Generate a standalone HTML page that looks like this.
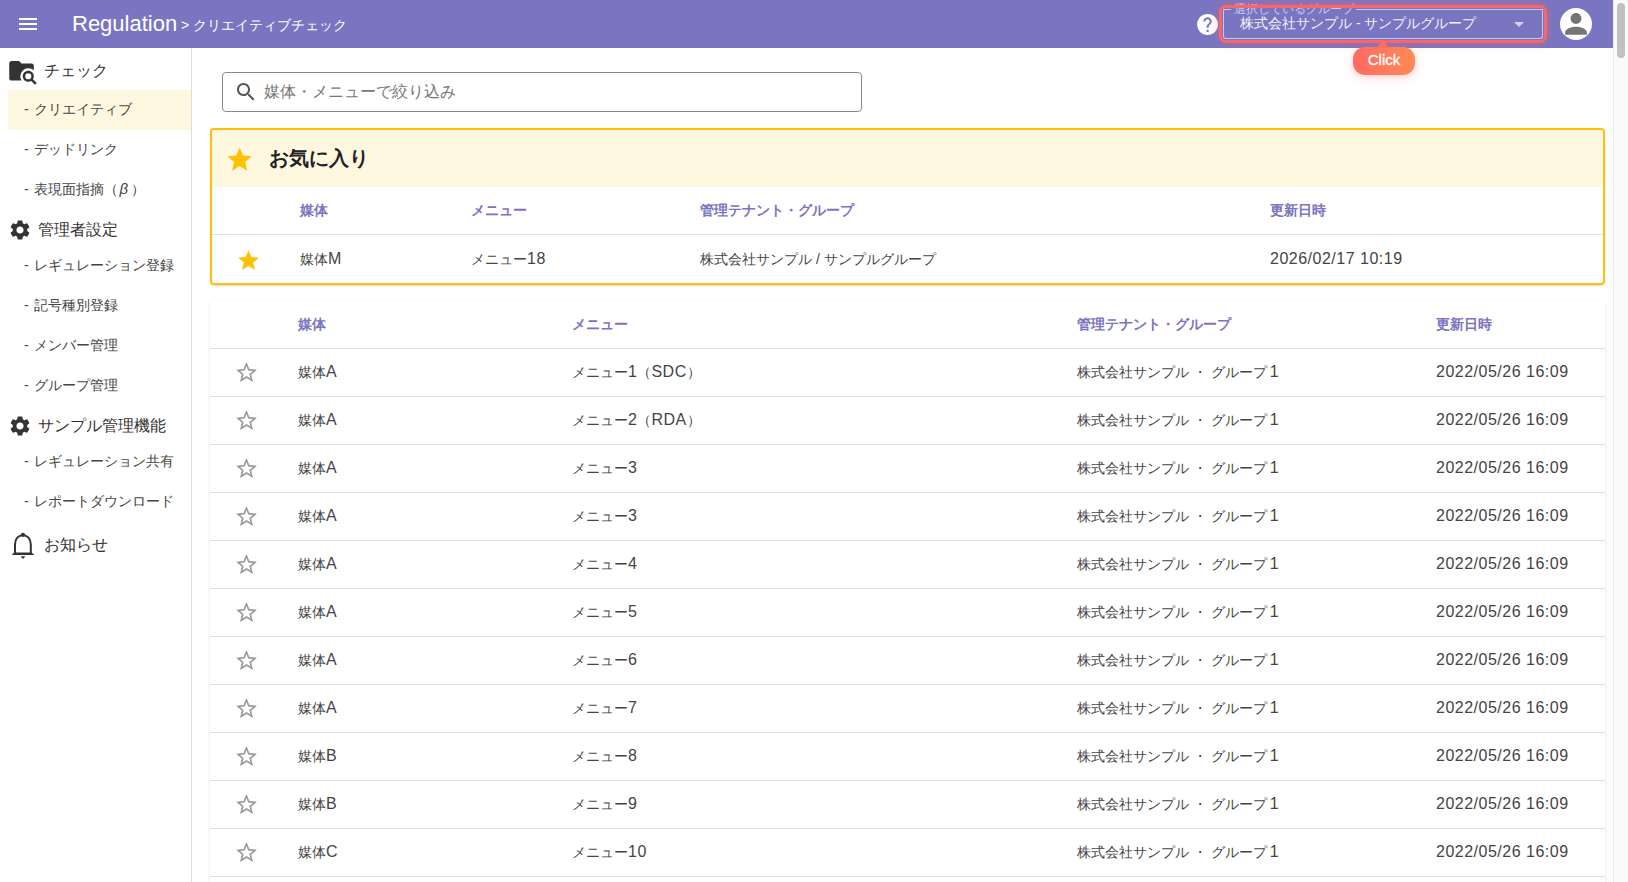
<!DOCTYPE html>
<html><head><meta charset="utf-8"><title>Regulation</title>
<style>
*{box-sizing:border-box;margin:0;padding:0}
html,body{width:1628px;height:882px;overflow:hidden;background:#fff;font-family:"Liberation Sans",sans-serif;color:#444}
i{font-style:normal;display:inline-block;width:1em;text-align:center}
.abs{position:absolute}
#hdr{position:absolute;left:0;top:0;width:1613px;height:48px;background:#7a75c1}
#sb{position:absolute;left:1613px;top:0;width:15px;height:882px;background:#fafafa;border-left:1px solid #ebebeb}
#thumb{position:absolute;left:1617px;top:3px;width:8px;height:55px;border-radius:4px;background:#c1c1c1}
#side{position:absolute;left:0;top:48px;width:192px;height:834px;border-right:1px solid #ddd;background:#fff}
.si{position:absolute;left:24px;font-size:14px;color:#444;white-space:nowrap;line-height:20px;word-spacing:1px}
.sh{position:absolute;font-size:16px;color:#333;white-space:nowrap;line-height:22px}
.t{position:absolute;white-space:nowrap;font-size:14px;line-height:20px;color:#444}
.l{font-size:16px;letter-spacing:.5px}
.th{position:absolute;white-space:nowrap;font-size:14px;line-height:20px;color:#7a75c1;font-weight:bold}
.line{position:absolute;height:1px;background:#e0e0e0}
</style></head><body>
<div id="hdr">
<svg class="abs" style="left:16px;top:12px" width="24" height="24" viewBox="0 0 24 24"><path fill="#fff" d="M3 18h18v-2H3v2zm0-5h18v-2H3v2zm0-7v2h18V6H3z"/></svg>
<div class="abs" style="left:72px;top:10px;font-size:22px;line-height:28px;color:#fff;white-space:nowrap">Regulation</div>
<div class="abs" style="left:181px;top:15px;font-size:14px;line-height:20px;color:#fff;white-space:nowrap">&gt; <i>ク</i><i>リ</i><i>エ</i><i>イ</i><i>テ</i><i>ィ</i><i>ブ</i><i>チ</i><i>ェ</i><i>ッ</i><i>ク</i></div>
<svg class="abs" style="left:1194.9px;top:11.9px" width="25.2" height="25.2" viewBox="0 0 24 24"><path fill="#fff" d="M12 2C6.48 2 2 6.48 2 12s4.48 10 10 10 10-4.48 10-10S17.52 2 12 2zm1 17h-2v-2h2v2zm2.07-7.75l-.9.92C13.45 12.9 13 13.5 13 15h-2v-.5c0-1.1.45-2.1 1.17-2.83l1.24-1.26c.37-.36.59-.86.59-1.41 0-1.1-.9-2-2-2s-2 .9-2 2H8c0-2.21 1.79-4 4-4s4 1.79 4 4c0 .88-.36 1.68-.93 2.25z"/></svg>
<div class="abs" style="left:1223px;top:9px;width:320px;height:30px;border:1px solid #c8c6f0;border-top:none;border-radius:3px"></div>
<div class="abs" style="left:1223px;top:9px;width:8px;height:1px;background:#c8c6f0"></div>
<div class="abs" style="left:1356px;top:9px;width:187px;height:1px;background:#c8c6f0"></div>
<div class="abs" style="left:1234px;top:2px;font-size:12px;line-height:14px;color:#cdcaf0;white-space:nowrap"><i>選</i><i>択</i><i>し</i><i>て</i><i>い</i><i>る</i><i>グ</i><i>ル</i><i>ー</i><i>プ</i></div>
<div class="abs" style="left:1240px;top:14px;font-size:14px;line-height:18px;color:#f4f4fc;white-space:nowrap"><i>株</i><i>式</i><i>会</i><i>社</i><i>サ</i><i>ン</i><i>プ</i><i>ル</i> - <i>サ</i><i>ン</i><i>プ</i><i>ル</i><i>グ</i><i>ル</i><i>ー</i><i>プ</i></div>
<div class="abs" style="left:1219px;top:5px;width:328px;height:38px;border:3.5px solid #ff6464;border-radius:7px;box-shadow:0 0 8px rgba(255,100,100,.45)"></div>
<svg class="abs" style="left:1514px;top:22px" width="10" height="5" viewBox="0 0 10 5"><path d="M0 0h10L5 5z" fill="#d6d0f2"/></svg>
<svg class="abs" style="left:1560px;top:8px" width="32" height="32" viewBox="0 0 32 32"><circle cx="16" cy="16" r="16" fill="#fff"/><g transform="translate(-0.3,-0.4) scale(1.36)"><path fill="#757575" d="M12 12c2.21 0 4-1.79 4-4s-1.79-4-4-4-4 1.79-4 4 1.79 4 4 4zm0 2c-2.67 0-8 1.34-8 4v2h16v-2c0-2.66-5.33-4-8-4z"/></g></svg>
</div>
<div class="abs" style="left:1353px;top:47px;width:62px;height:28px;border-radius:12px;background:linear-gradient(90deg,#ff6a64,#ff8a55);box-shadow:0 2px 10px rgba(255,110,110,.35)"></div>
<svg class="abs" style="left:1377px;top:39px" width="12" height="9" viewBox="0 0 12 9"><path d="M6 0L12 9H0z" fill="#ff6c62"/></svg>
<div class="abs" style="left:1353px;top:50px;width:62px;text-align:center;font-size:15px;line-height:20px;color:#fff;-webkit-text-stroke:.3px #fff">Click</div>
<div id="sb"></div><div id="thumb"></div>
<div id="side"><div class="abs" style="left:8px;top:42px;width:183px;height:40px;background:#fff8e1"></div></div>
<div class="sh" style="left:44px;top:60px"><i>チ</i><i>ェ</i><i>ッ</i><i>ク</i></div>
<div class="si" style="top:99px">- <i>ク</i><i>リ</i><i>エ</i><i>イ</i><i>テ</i><i>ィ</i><i>ブ</i></div>
<div class="si" style="top:139px">- <i>デ</i><i>ッ</i><i>ド</i><i>リ</i><i>ン</i><i>ク</i></div>
<div class="si" style="top:179px">- <i>表</i><i>現</i><i>面</i><i>指</i><i>摘</i><i>（</i><span style="font-style:italic;font-size:15px;margin:0 3px 0 2px">β</span><i>）</i></div>
<div class="sh" style="left:38px;top:219px"><i>管</i><i>理</i><i>者</i><i>設</i><i>定</i></div>
<div class="si" style="top:255px">- <i>レ</i><i>ギ</i><i>ュ</i><i>レ</i><i>ー</i><i>シ</i><i>ョ</i><i>ン</i><i>登</i><i>録</i></div>
<div class="si" style="top:295px">- <i>記</i><i>号</i><i>種</i><i>別</i><i>登</i><i>録</i></div>
<div class="si" style="top:335px">- <i>メ</i><i>ン</i><i>バ</i><i>ー</i><i>管</i><i>理</i></div>
<div class="si" style="top:375px">- <i>グ</i><i>ル</i><i>ー</i><i>プ</i><i>管</i><i>理</i></div>
<div class="sh" style="left:38px;top:415px"><i>サ</i><i>ン</i><i>プ</i><i>ル</i><i>管</i><i>理</i><i>機</i><i>能</i></div>
<div class="si" style="top:451px">- <i>レ</i><i>ギ</i><i>ュ</i><i>レ</i><i>ー</i><i>シ</i><i>ョ</i><i>ン</i><i>共</i><i>有</i></div>
<div class="si" style="top:491px">- <i>レ</i><i>ポ</i><i>ー</i><i>ト</i><i>ダ</i><i>ウ</i><i>ン</i><i>ロ</i><i>ー</i><i>ド</i></div>
<div class="sh" style="left:44px;top:534px"><i>お</i><i>知</i><i>ら</i><i>せ</i></div>
<div class="abs" style="left:222px;top:72px;width:640px;height:40px;border:1px solid #888;border-radius:4px"></div>
<div class="t" style="left:264px;top:82px;font-size:16px;color:#777"><i>媒</i><i>体</i><i>・</i><i>メ</i><i>ニ</i><i>ュ</i><i>ー</i><i>で</i><i>絞</i><i>り</i><i>込</i><i>み</i></div>
<div class="abs" style="left:210px;top:128px;width:1395px;height:157px;border:2px solid #ffc107;border-radius:4px;overflow:hidden;box-shadow:0 1px 2px rgba(0,0,0,.15)"><div class="abs" style="left:0;top:0;width:100%;height:57px;background:#fff8e1"></div><div class="line" style="left:0;top:104px;width:100%"></div></div>
<div class="t" style="left:269px;top:146px;font-size:20px;line-height:24px;color:#222;font-weight:bold"><i>お</i><i>気</i><i>に</i><i>入</i><i>り</i></div>
<div class="th" style="left:300px;top:200px"><i>媒</i><i>体</i></div>
<div class="th" style="left:471px;top:200px"><i>メ</i><i>ニ</i><i>ュ</i><i>ー</i></div>
<div class="th" style="left:700px;top:200px"><i>管</i><i>理</i><i>テ</i><i>ナ</i><i>ン</i><i>ト</i><i>・</i><i>グ</i><i>ル</i><i>ー</i><i>プ</i></div>
<div class="th" style="left:1270px;top:200px"><i>更</i><i>新</i><i>日</i><i>時</i></div>
<div class="t" style="left:300px;top:249px"><i>媒</i><i>体</i><span class="l">M</span></div>
<div class="t" style="left:471px;top:249px"><i>メ</i><i>ニ</i><i>ュ</i><i>ー</i><span class="l">18</span></div>
<div class="t" style="left:700px;top:249px"><i>株</i><i>式</i><i>会</i><i>社</i><i>サ</i><i>ン</i><i>プ</i><i>ル</i> / <i>サ</i><i>ン</i><i>プ</i><i>ル</i><i>グ</i><i>ル</i><i>ー</i><i>プ</i></div>
<div class="t" style="left:1270px;top:249px"><span class="l">2026/02/17 10:19</span></div>
<div class="abs" style="left:210px;top:300px;width:1395px;height:600px;box-shadow:0 1px 3px rgba(0,0,0,.12);border-radius:4px;background:#fff"></div>
<div class="th" style="left:298px;top:314px"><i>媒</i><i>体</i></div>
<div class="th" style="left:572px;top:314px"><i>メ</i><i>ニ</i><i>ュ</i><i>ー</i></div>
<div class="th" style="left:1077px;top:314px"><i>管</i><i>理</i><i>テ</i><i>ナ</i><i>ン</i><i>ト</i><i>・</i><i>グ</i><i>ル</i><i>ー</i><i>プ</i></div>
<div class="th" style="left:1436px;top:314px"><i>更</i><i>新</i><i>日</i><i>時</i></div>
<div class="line" style="left:210px;top:348px;width:1395px"></div>
<svg class="abs" style="left:233.9px;top:360px" width="25" height="25" viewBox="0 0 24 24"><path fill="#999" d="M22 9.24l-7.19-.62L12 2 9.19 8.63 2 9.24l5.46 4.73L5.82 21 12 17.27 18.18 21l-1.63-7.03L22 9.24zM12 15.4l-3.76 2.27 1-4.28-3.32-2.88 4.38-.38L12 6.1l1.71 4.04 4.38.38-3.32 2.88 1 4.28L12 15.4z"/></svg>
<div class="t" style="left:298px;top:362px"><i>媒</i><i>体</i><span class="l">A</span></div>
<div class="t" style="left:572px;top:362px"><i>メ</i><i>ニ</i><i>ュ</i><i>ー</i><span class="l">1</span><i>（</i><span class="l">SDC</span><i>）</i></div>
<div class="t" style="left:1077px;top:362px"><i>株</i><i>式</i><i>会</i><i>社</i><i>サ</i><i>ン</i><i>プ</i><i>ル</i> <i>・</i> <i>グ</i><i>ル</i><i>ー</i><i>プ</i><span class="l" style="margin-left:3px">1</span></div>
<div class="t" style="left:1436px;top:362px"><span class="l">2022/05/26 16:09</span></div>
<div class="line" style="left:210px;top:396px;width:1395px"></div>
<svg class="abs" style="left:233.9px;top:408px" width="25" height="25" viewBox="0 0 24 24"><path fill="#999" d="M22 9.24l-7.19-.62L12 2 9.19 8.63 2 9.24l5.46 4.73L5.82 21 12 17.27 18.18 21l-1.63-7.03L22 9.24zM12 15.4l-3.76 2.27 1-4.28-3.32-2.88 4.38-.38L12 6.1l1.71 4.04 4.38.38-3.32 2.88 1 4.28L12 15.4z"/></svg>
<div class="t" style="left:298px;top:410px"><i>媒</i><i>体</i><span class="l">A</span></div>
<div class="t" style="left:572px;top:410px"><i>メ</i><i>ニ</i><i>ュ</i><i>ー</i><span class="l">2</span><i>（</i><span class="l">RDA</span><i>）</i></div>
<div class="t" style="left:1077px;top:410px"><i>株</i><i>式</i><i>会</i><i>社</i><i>サ</i><i>ン</i><i>プ</i><i>ル</i> <i>・</i> <i>グ</i><i>ル</i><i>ー</i><i>プ</i><span class="l" style="margin-left:3px">1</span></div>
<div class="t" style="left:1436px;top:410px"><span class="l">2022/05/26 16:09</span></div>
<div class="line" style="left:210px;top:444px;width:1395px"></div>
<svg class="abs" style="left:233.9px;top:456px" width="25" height="25" viewBox="0 0 24 24"><path fill="#999" d="M22 9.24l-7.19-.62L12 2 9.19 8.63 2 9.24l5.46 4.73L5.82 21 12 17.27 18.18 21l-1.63-7.03L22 9.24zM12 15.4l-3.76 2.27 1-4.28-3.32-2.88 4.38-.38L12 6.1l1.71 4.04 4.38.38-3.32 2.88 1 4.28L12 15.4z"/></svg>
<div class="t" style="left:298px;top:458px"><i>媒</i><i>体</i><span class="l">A</span></div>
<div class="t" style="left:572px;top:458px"><i>メ</i><i>ニ</i><i>ュ</i><i>ー</i><span class="l">3</span></div>
<div class="t" style="left:1077px;top:458px"><i>株</i><i>式</i><i>会</i><i>社</i><i>サ</i><i>ン</i><i>プ</i><i>ル</i> <i>・</i> <i>グ</i><i>ル</i><i>ー</i><i>プ</i><span class="l" style="margin-left:3px">1</span></div>
<div class="t" style="left:1436px;top:458px"><span class="l">2022/05/26 16:09</span></div>
<div class="line" style="left:210px;top:492px;width:1395px"></div>
<svg class="abs" style="left:233.9px;top:504px" width="25" height="25" viewBox="0 0 24 24"><path fill="#999" d="M22 9.24l-7.19-.62L12 2 9.19 8.63 2 9.24l5.46 4.73L5.82 21 12 17.27 18.18 21l-1.63-7.03L22 9.24zM12 15.4l-3.76 2.27 1-4.28-3.32-2.88 4.38-.38L12 6.1l1.71 4.04 4.38.38-3.32 2.88 1 4.28L12 15.4z"/></svg>
<div class="t" style="left:298px;top:506px"><i>媒</i><i>体</i><span class="l">A</span></div>
<div class="t" style="left:572px;top:506px"><i>メ</i><i>ニ</i><i>ュ</i><i>ー</i><span class="l">3</span></div>
<div class="t" style="left:1077px;top:506px"><i>株</i><i>式</i><i>会</i><i>社</i><i>サ</i><i>ン</i><i>プ</i><i>ル</i> <i>・</i> <i>グ</i><i>ル</i><i>ー</i><i>プ</i><span class="l" style="margin-left:3px">1</span></div>
<div class="t" style="left:1436px;top:506px"><span class="l">2022/05/26 16:09</span></div>
<div class="line" style="left:210px;top:540px;width:1395px"></div>
<svg class="abs" style="left:233.9px;top:552px" width="25" height="25" viewBox="0 0 24 24"><path fill="#999" d="M22 9.24l-7.19-.62L12 2 9.19 8.63 2 9.24l5.46 4.73L5.82 21 12 17.27 18.18 21l-1.63-7.03L22 9.24zM12 15.4l-3.76 2.27 1-4.28-3.32-2.88 4.38-.38L12 6.1l1.71 4.04 4.38.38-3.32 2.88 1 4.28L12 15.4z"/></svg>
<div class="t" style="left:298px;top:554px"><i>媒</i><i>体</i><span class="l">A</span></div>
<div class="t" style="left:572px;top:554px"><i>メ</i><i>ニ</i><i>ュ</i><i>ー</i><span class="l">4</span></div>
<div class="t" style="left:1077px;top:554px"><i>株</i><i>式</i><i>会</i><i>社</i><i>サ</i><i>ン</i><i>プ</i><i>ル</i> <i>・</i> <i>グ</i><i>ル</i><i>ー</i><i>プ</i><span class="l" style="margin-left:3px">1</span></div>
<div class="t" style="left:1436px;top:554px"><span class="l">2022/05/26 16:09</span></div>
<div class="line" style="left:210px;top:588px;width:1395px"></div>
<svg class="abs" style="left:233.9px;top:600px" width="25" height="25" viewBox="0 0 24 24"><path fill="#999" d="M22 9.24l-7.19-.62L12 2 9.19 8.63 2 9.24l5.46 4.73L5.82 21 12 17.27 18.18 21l-1.63-7.03L22 9.24zM12 15.4l-3.76 2.27 1-4.28-3.32-2.88 4.38-.38L12 6.1l1.71 4.04 4.38.38-3.32 2.88 1 4.28L12 15.4z"/></svg>
<div class="t" style="left:298px;top:602px"><i>媒</i><i>体</i><span class="l">A</span></div>
<div class="t" style="left:572px;top:602px"><i>メ</i><i>ニ</i><i>ュ</i><i>ー</i><span class="l">5</span></div>
<div class="t" style="left:1077px;top:602px"><i>株</i><i>式</i><i>会</i><i>社</i><i>サ</i><i>ン</i><i>プ</i><i>ル</i> <i>・</i> <i>グ</i><i>ル</i><i>ー</i><i>プ</i><span class="l" style="margin-left:3px">1</span></div>
<div class="t" style="left:1436px;top:602px"><span class="l">2022/05/26 16:09</span></div>
<div class="line" style="left:210px;top:636px;width:1395px"></div>
<svg class="abs" style="left:233.9px;top:648px" width="25" height="25" viewBox="0 0 24 24"><path fill="#999" d="M22 9.24l-7.19-.62L12 2 9.19 8.63 2 9.24l5.46 4.73L5.82 21 12 17.27 18.18 21l-1.63-7.03L22 9.24zM12 15.4l-3.76 2.27 1-4.28-3.32-2.88 4.38-.38L12 6.1l1.71 4.04 4.38.38-3.32 2.88 1 4.28L12 15.4z"/></svg>
<div class="t" style="left:298px;top:650px"><i>媒</i><i>体</i><span class="l">A</span></div>
<div class="t" style="left:572px;top:650px"><i>メ</i><i>ニ</i><i>ュ</i><i>ー</i><span class="l">6</span></div>
<div class="t" style="left:1077px;top:650px"><i>株</i><i>式</i><i>会</i><i>社</i><i>サ</i><i>ン</i><i>プ</i><i>ル</i> <i>・</i> <i>グ</i><i>ル</i><i>ー</i><i>プ</i><span class="l" style="margin-left:3px">1</span></div>
<div class="t" style="left:1436px;top:650px"><span class="l">2022/05/26 16:09</span></div>
<div class="line" style="left:210px;top:684px;width:1395px"></div>
<svg class="abs" style="left:233.9px;top:696px" width="25" height="25" viewBox="0 0 24 24"><path fill="#999" d="M22 9.24l-7.19-.62L12 2 9.19 8.63 2 9.24l5.46 4.73L5.82 21 12 17.27 18.18 21l-1.63-7.03L22 9.24zM12 15.4l-3.76 2.27 1-4.28-3.32-2.88 4.38-.38L12 6.1l1.71 4.04 4.38.38-3.32 2.88 1 4.28L12 15.4z"/></svg>
<div class="t" style="left:298px;top:698px"><i>媒</i><i>体</i><span class="l">A</span></div>
<div class="t" style="left:572px;top:698px"><i>メ</i><i>ニ</i><i>ュ</i><i>ー</i><span class="l">7</span></div>
<div class="t" style="left:1077px;top:698px"><i>株</i><i>式</i><i>会</i><i>社</i><i>サ</i><i>ン</i><i>プ</i><i>ル</i> <i>・</i> <i>グ</i><i>ル</i><i>ー</i><i>プ</i><span class="l" style="margin-left:3px">1</span></div>
<div class="t" style="left:1436px;top:698px"><span class="l">2022/05/26 16:09</span></div>
<div class="line" style="left:210px;top:732px;width:1395px"></div>
<svg class="abs" style="left:233.9px;top:744px" width="25" height="25" viewBox="0 0 24 24"><path fill="#999" d="M22 9.24l-7.19-.62L12 2 9.19 8.63 2 9.24l5.46 4.73L5.82 21 12 17.27 18.18 21l-1.63-7.03L22 9.24zM12 15.4l-3.76 2.27 1-4.28-3.32-2.88 4.38-.38L12 6.1l1.71 4.04 4.38.38-3.32 2.88 1 4.28L12 15.4z"/></svg>
<div class="t" style="left:298px;top:746px"><i>媒</i><i>体</i><span class="l">B</span></div>
<div class="t" style="left:572px;top:746px"><i>メ</i><i>ニ</i><i>ュ</i><i>ー</i><span class="l">8</span></div>
<div class="t" style="left:1077px;top:746px"><i>株</i><i>式</i><i>会</i><i>社</i><i>サ</i><i>ン</i><i>プ</i><i>ル</i> <i>・</i> <i>グ</i><i>ル</i><i>ー</i><i>プ</i><span class="l" style="margin-left:3px">1</span></div>
<div class="t" style="left:1436px;top:746px"><span class="l">2022/05/26 16:09</span></div>
<div class="line" style="left:210px;top:780px;width:1395px"></div>
<svg class="abs" style="left:233.9px;top:792px" width="25" height="25" viewBox="0 0 24 24"><path fill="#999" d="M22 9.24l-7.19-.62L12 2 9.19 8.63 2 9.24l5.46 4.73L5.82 21 12 17.27 18.18 21l-1.63-7.03L22 9.24zM12 15.4l-3.76 2.27 1-4.28-3.32-2.88 4.38-.38L12 6.1l1.71 4.04 4.38.38-3.32 2.88 1 4.28L12 15.4z"/></svg>
<div class="t" style="left:298px;top:794px"><i>媒</i><i>体</i><span class="l">B</span></div>
<div class="t" style="left:572px;top:794px"><i>メ</i><i>ニ</i><i>ュ</i><i>ー</i><span class="l">9</span></div>
<div class="t" style="left:1077px;top:794px"><i>株</i><i>式</i><i>会</i><i>社</i><i>サ</i><i>ン</i><i>プ</i><i>ル</i> <i>・</i> <i>グ</i><i>ル</i><i>ー</i><i>プ</i><span class="l" style="margin-left:3px">1</span></div>
<div class="t" style="left:1436px;top:794px"><span class="l">2022/05/26 16:09</span></div>
<div class="line" style="left:210px;top:828px;width:1395px"></div>
<svg class="abs" style="left:233.9px;top:840px" width="25" height="25" viewBox="0 0 24 24"><path fill="#999" d="M22 9.24l-7.19-.62L12 2 9.19 8.63 2 9.24l5.46 4.73L5.82 21 12 17.27 18.18 21l-1.63-7.03L22 9.24zM12 15.4l-3.76 2.27 1-4.28-3.32-2.88 4.38-.38L12 6.1l1.71 4.04 4.38.38-3.32 2.88 1 4.28L12 15.4z"/></svg>
<div class="t" style="left:298px;top:842px"><i>媒</i><i>体</i><span class="l">C</span></div>
<div class="t" style="left:572px;top:842px"><i>メ</i><i>ニ</i><i>ュ</i><i>ー</i><span class="l">10</span></div>
<div class="t" style="left:1077px;top:842px"><i>株</i><i>式</i><i>会</i><i>社</i><i>サ</i><i>ン</i><i>プ</i><i>ル</i> <i>・</i> <i>グ</i><i>ル</i><i>ー</i><i>プ</i><span class="l" style="margin-left:3px">1</span></div>
<div class="t" style="left:1436px;top:842px"><span class="l">2022/05/26 16:09</span></div>
<div class="line" style="left:210px;top:876px;width:1395px"></div>
<svg class="abs" style="left:8px;top:56px" width="29.5" height="29.5" viewBox="0 0 24 24"><path fill="#333" d="M16.5,12C19,12 21,14 21,16.5C21,17.38 20.75,18.21 20.31,18.9L23.39,22L22,23.39L18.88,20.32C18.19,20.75 17.37,21 16.5,21C14,21 12,19 12,16.5C12,14 14,12 16.5,12M16.5,14A2.5,2.5 0 0,0 14,16.5A2.5,2.5 0 0,0 16.5,19A2.5,2.5 0 0,0 19,16.5A2.5,2.5 0 0,0 16.5,14M9,4L11,6H19A2,2 0 0,1 21,8V11.81C19.83,10.69 18.25,10 16.5,10A6.5,6.5 0 0,0 10,16.5C10,17.79 10.37,19 11,20H3C1.890,20 1,19.1 1,18V6C1,4.89 1.89,4 3,4H9Z"/></svg>
<svg class="abs" style="left:8px;top:218px" width="24" height="24" viewBox="0 0 24 24"><path fill="#333" d="M19.14 12.94c.04-.3.06-.61.06-.94 0-.32-.02-.64-.07-.94l2.03-1.58c.18-.14.23-.41.12-.61l-1.92-3.32c-.12-.22-.37-.29-.59-.22l-2.39.96c-.5-.38-1.030-.7-1.62-.94l-.36-2.54c-.04-.24-.24-.41-.48-.41h-3.84c-.24 0-.43.17-.47.41l-.36 2.54c-.59.24-1.13.57-1.62.94l-2.39-.96c-.22-.08-.47 0-.59.22L2.74 8.87c-.12.21-.08.47.12.61l2.03 1.58c-.05.3-.09.63-.09.94s.02.64.07.94l-2.03 1.58c-.18.14-.23.41-.12.61l1.92 3.32c.12.22.37.29.59.22l2.39-.96c.5.38 1.03.7 1.62.94l.36 2.54c.05.24.24.41.48.41h3.84c.24 0 .44-.17.47-.41l.36-2.54c.59-.24 1.13-.56 1.62-.94l2.39.96c.22.08.47 0 .59-.22l1.92-3.32c.12-.22.07-.47-.12-.61l-2.01-1.58zM12 15.6c-1.98 0-3.6-1.62-3.6-3.6s1.62-3.6 3.6-3.6 3.6 1.62 3.6 3.6-1.62 3.6-3.6 3.6z"/></svg>
<svg class="abs" style="left:8px;top:414px" width="24" height="24" viewBox="0 0 24 24"><path fill="#333" d="M19.14 12.94c.04-.3.06-.61.06-.94 0-.32-.02-.64-.07-.94l2.03-1.58c.18-.14.23-.41.12-.61l-1.92-3.32c-.12-.22-.37-.29-.59-.22l-2.39.96c-.5-.38-1.030-.7-1.62-.94l-.36-2.54c-.04-.24-.24-.41-.48-.41h-3.84c-.24 0-.43.17-.47.41l-.36 2.54c-.59.24-1.13.57-1.62.94l-2.39-.96c-.22-.08-.47 0-.59.22L2.74 8.87c-.12.21-.08.47.12.61l2.03 1.58c-.05.3-.09.63-.09.94s.02.64.07.94l-2.03 1.58c-.18.14-.23.41-.12.61l1.92 3.32c.12.22.37.29.59.22l2.39-.96c.5.38 1.03.7 1.62.94l.36 2.54c.05.24.24.41.48.41h3.84c.24 0 .44-.17.47-.41l.36-2.54c.59-.24 1.13-.56 1.62-.94l2.39.96c.22.08.47 0 .59-.22l1.92-3.32c.12-.22.07-.47-.12-.61l-2.01-1.58zM12 15.6c-1.98 0-3.6-1.62-3.6-3.6s1.62-3.6 3.6-3.6 3.6 1.62 3.6 3.6-1.62 3.6-3.6 3.6z"/></svg>
<svg class="abs" style="left:0;top:525px" width="40" height="40" viewBox="0 0 40 40"><path fill="none" stroke="#333" stroke-width="2" d="M15 28V19.5C15 13.8 18.5 10.2 22.9 10.2S30.8 13.8 30.8 19.5V28"/><path fill="#333" d="M11.8 30H34.3L31.8 27.4H14.2Z"/><circle cx="23" cy="9.8" r="2.1" fill="#333"/><path fill="#333" d="M20.6 31.3H25.4L23 34Z"/></svg>
<svg class="abs" style="left:234px;top:80px" width="24" height="24" viewBox="0 0 24 24"><path fill="#555" d="M15.5 14h-.79l-.28-.27C15.41 12.59 16 11.11 16 9.5 16 5.91 13.09 3 9.5 3S3 5.91 3 9.5 5.91 16 9.5 16c1.61 0 3.09-.59 4.23-1.57l.27.28v.79l5 4.99L20.49 19l-4.99-5zm-6 0C7.01 14 5 11.99 5 9.5S7.01 5 9.5 5 14 7.01 14 9.5 11.99 14 9.5 14z"/></svg>
<svg class="abs" style="left:224.7px;top:145.3px" width="29.3" height="29.3" viewBox="0 0 24 24"><path fill="#ffc107" d="M12 17.27L18.18 21l-1.64-7.03L22 9.24l-7.19-.61L12 2 9.19 8.63 2 9.24l5.46 4.73L5.82 21z"/></svg>
<svg class="abs" style="left:235.5px;top:247.5px" width="25" height="25" viewBox="0 0 24 24"><path fill="#ffc107" d="M12 17.27L18.18 21l-1.64-7.03L22 9.24l-7.19-.61L12 2 9.19 8.63 2 9.24l5.46 4.73L5.82 21z"/></svg>
</body></html>
